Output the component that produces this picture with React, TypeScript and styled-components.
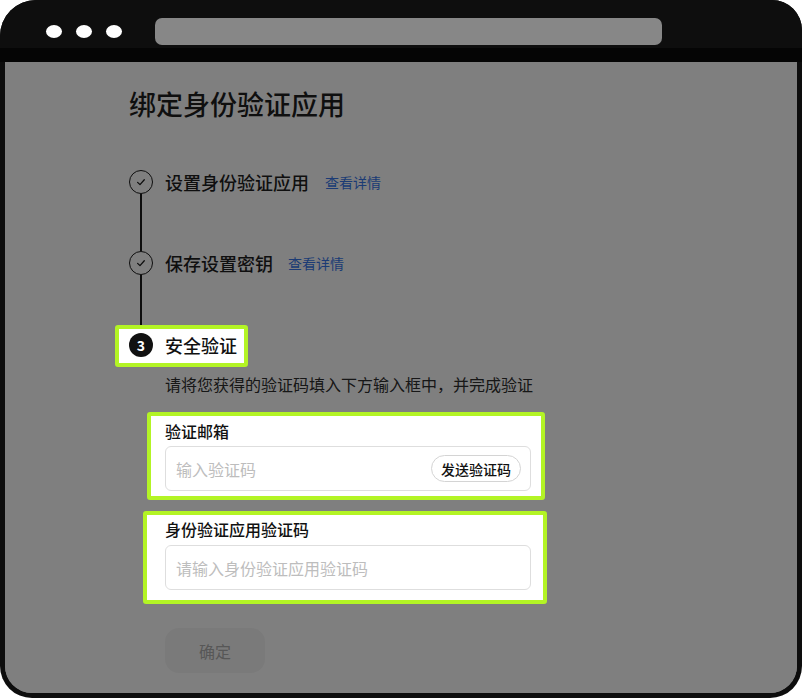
import React from "react";
import styled, { createGlobalStyle } from "styled-components";

const Global = createGlobalStyle`
  html, body { margin: 0; padding: 0; background: #ffffff; }
  body { font-family: "Noto Sans CJK SC", "Noto Sans", sans-serif; }
  * { box-sizing: border-box; }
`;

const LIME = "#b3f425";

const Frame = styled.div`
  width: 802px;
  height: 698px;
  background: #0d0d0d;
  border-radius: 36px 30px 32px 32px;
  display: flex;
  flex-direction: column;
  overflow: hidden;
`;

const TopBar = styled.div`
  height: 62px;
  flex: none;
  display: flex;
  align-items: flex-start;
  padding: 18px 0 0 46px;
  background: linear-gradient(#0e0e0e 0 48px, #050505 48px 62px);
`;

const Dots = styled.div`
  display: flex;
  gap: 14px;
  padding-top: 7px;
  margin-right: 33px;
`;

const Dot = styled.span`
  width: 16px;
  height: 13px;
  border-radius: 50%;
  background: #ffffff;
`;

const AddressBar = styled.div`
  width: 507px;
  height: 27px;
  border-radius: 7px;
  background: #878787;
`;

const Viewport = styled.div`
  flex: 1;
  margin: 0 5px 5px;
  background: #ffffff;
  border-radius: 0 0 27px 27px;
  position: relative;
  overflow: hidden;
`;

const Overlay = styled.div`
  position: absolute;
  inset: 0;
  background: rgba(0, 0, 0, 0.5);
  z-index: 1;
  pointer-events: none;
`;

const Content = styled.div`
  padding: 24px 0 0 124px;
  display: flex;
  flex-direction: column;
  align-items: flex-start;
`;

const Title = styled.h1`
  margin: 0 0 48px;
  font-size: 27px;
  line-height: 36px;
  font-weight: 500;
  color: #1f1f1f;
`;

const StepHeader = styled.div<{ $active?: boolean }>`
  display: flex;
  align-items: center;
  height: ${(p) => (p.$active ? "auto" : "24px")};
  gap: 12px;
  ${(p) =>
    p.$active &&
    `
    position: relative;
    z-index: 2;
    background: #ffffff;
    border: 4px solid ${LIME};
    border-radius: 3px;
    margin: -8px -11px -10px -14px;
    padding: 4px 7px 6px 10px;
  `}
`;

const Circle = styled.span<{ $filled?: boolean }>`
  width: 24px;
  height: 24px;
  flex: none;
  border-radius: 50%;
  display: flex;
  align-items: center;
  justify-content: center;
  border: ${(p) => (p.$filled ? "none" : "1.5px solid #1c1c1c")};
  background: ${(p) => (p.$filled ? "#111111" : "#ffffff")};
  color: #ffffff;
  font-size: 14px;
  font-weight: 700;
  line-height: 1;
`;

const StepTitle = styled.span<{ $active?: boolean }>`
  font-size: 18px;
  line-height: 24px;
  font-weight: 500;
  color: ${(p) => (p.$active ? "#111111" : "#1f1f1f")};
`;

const DetailLink = styled.a<{ $gap: number }>`
  margin-left: ${(p) => p.$gap - 12}px;
  font-size: 14px;
  line-height: 24px;
  color: #3877ea;
  text-decoration: none;
  cursor: pointer;
`;

const Connector = styled.div<{ $h: number }>`
  width: 1.5px;
  height: ${(p) => p.$h}px;
  margin-left: 11.25px;
  background: #1a1a1a;
`;

const StepBody = styled.div`
  padding-left: 36px;
  width: 402px;
  display: flex;
  flex-direction: column;
`;

const Description = styled.p`
  margin: 15px 0 0;
  font-size: 16px;
  line-height: 24px;
  color: #2e2e2e;
  white-space: nowrap;
`;

const FieldBox = styled.div<{ $top: number; $pad: string; $out: string; $gap: number }>`
  position: relative;
  z-index: 2;
  margin-top: ${(p) => p.$top}px;
  margin-left: ${(p) => p.$out.split(" ")[0]};
  margin-right: ${(p) => p.$out.split(" ")[1]};
  padding: ${(p) => p.$pad};
  background: #ffffff;
  border: 4px solid ${LIME};
  border-radius: 3px;
  display: flex;
  flex-direction: column;
  gap: ${(p) => p.$gap}px;
`;

const Label = styled.label`
  font-size: 16px;
  line-height: 22px;
  font-weight: 500;
  color: #111111;
`;

const InputWrap = styled.div`
  height: 45px;
  display: flex;
  align-items: center;
  border: 1px solid #dedede;
  border-radius: 6px;
  padding: 0 9px 0 10px;
  background: #ffffff;
`;

const TextInput = styled.input`
  flex: 1;
  min-width: 0;
  border: none;
  outline: none;
  padding: 0;
  font-family: "Noto Sans CJK SC", "Noto Sans", sans-serif;
  font-size: 16px;
  color: #222;
  background: transparent;
  &::placeholder {
    color: #bdbdbd;
  }
`;

const SendButton = styled.button`
  height: 27px;
  padding: 0 9px;
  border: 1px solid #d4d4d4;
  border-radius: 14px;
  background: #ffffff;
  font-family: "Noto Sans CJK SC", "Noto Sans", sans-serif;
  font-size: 14px;
  font-weight: 500;
  color: #111111;
  line-height: 1;
  cursor: pointer;
`;

const ConfirmButton = styled.button`
  margin-top: 24px;
  width: 100px;
  height: 45px;
  border: none;
  border-radius: 14px;
  background: #f5f5f5;
  color: #aeaeae;
  font-family: "Noto Sans CJK SC", "Noto Sans", sans-serif;
  font-size: 16px;
`;

const Check = () => (
  <svg width="24" height="24" viewBox="0 0 24 24" fill="none">
    <path
      d="M8.3 12.4 L10.9 14.9 L15.6 9.6"
      stroke="#1c1c1c"
      strokeWidth="1.4"
      strokeLinecap="round"
      strokeLinejoin="round"
    />
  </svg>
);

export default function App() {
  return (
    <>
      <Global />
      <Frame>
        <TopBar>
          <Dots>
            <Dot />
            <Dot />
            <Dot />
          </Dots>
          <AddressBar />
        </TopBar>
        <Viewport>
          <Content>
            <Title>绑定身份验证应用</Title>

            <StepHeader>
              <Circle>
                <Check />
              </Circle>
              <StepTitle>设置身份验证应用</StepTitle>
              <DetailLink $gap={16}>查看详情</DetailLink>
            </StepHeader>
            <Connector $h={57} />

            <StepHeader>
              <Circle>
                <Check />
              </Circle>
              <StepTitle>保存设置密钥</StepTitle>
              <DetailLink $gap={15}>查看详情</DetailLink>
            </StepHeader>
            <Connector $h={58} />

            <StepHeader $active>
              <Circle $filled>3</Circle>
              <StepTitle $active>安全验证</StepTitle>
            </StepHeader>

            <StepBody>
              <Description>请将您获得的验证码填入下方输入框中，并完成验证</Description>

              <FieldBox $top={16} $gap={4} $pad="4px 10px 5px 14px" $out="-18px -14px">
                <Label>验证邮箱</Label>
                <InputWrap>
                  <TextInput placeholder="输入验证码" />
                  <SendButton>发送验证码</SendButton>
                </InputWrap>
              </FieldBox>

              <FieldBox $top={11} $gap={5} $pad="3px 12px 10px 18px" $out="-22px -16px">
                <Label>身份验证应用验证码</Label>
                <InputWrap>
                  <TextInput placeholder="请输入身份验证应用验证码" />
                </InputWrap>
              </FieldBox>

              <ConfirmButton disabled>确定</ConfirmButton>
            </StepBody>
          </Content>
          <Overlay />
        </Viewport>
      </Frame>
    </>
  );
}
